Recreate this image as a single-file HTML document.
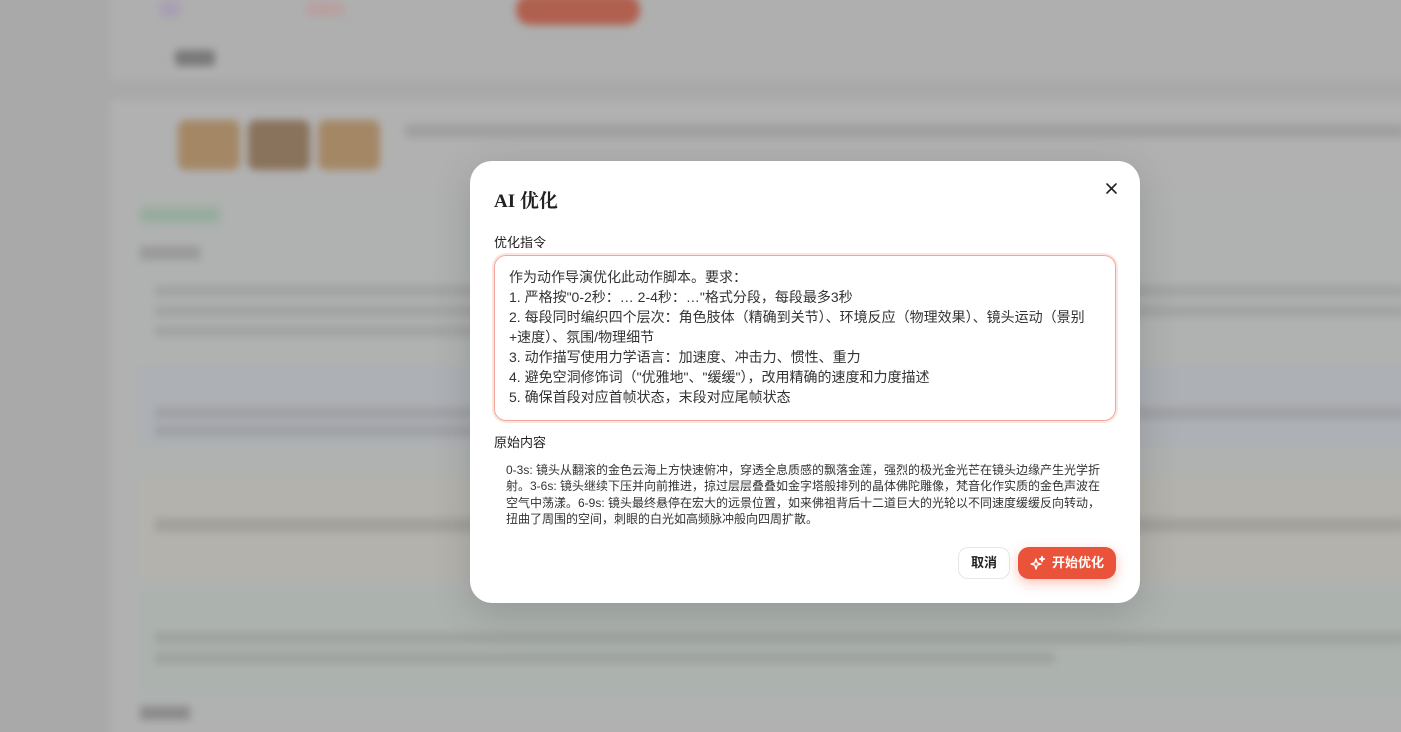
<!DOCTYPE html>
<html><head><meta charset="utf-8"><style>
*{margin:0;padding:0;box-sizing:border-box}
html,body{width:1401px;height:732px;overflow:hidden}
body{background:#a9a9a9;font-family:"Liberation Sans","Noto Sans CJK SC",sans-serif;position:relative}
.bg{position:absolute;inset:0;filter:blur(4px)}
.b{position:absolute}
.modal{position:absolute;left:470px;top:161px;width:670px;height:442px;background:#fff;border-radius:22px;box-shadow:0 10px 40px rgba(0,0,0,.15)}
.t{position:absolute;left:24px;top:25px;font-family:"Liberation Serif","Noto Serif CJK SC",serif;font-weight:bold;font-size:19px;color:#222}
.lbl{position:absolute;left:24px;font-size:13px;color:#222}
.ta{position:absolute;left:24px;top:94px;width:622px;height:166px;border:1.5px solid #f2a79c;border-radius:12px;box-shadow:0 0 0 2px #fde5e0;padding:11px 14px;font-size:14px;line-height:20px;color:#333;white-space:pre}
.orig{position:absolute;left:36px;top:301px;width:600px;font-size:12px;line-height:16.3px;color:#333}
.btn1{position:absolute;left:488px;top:386px;width:52px;height:32px;border:1px solid #e6e6e6;border-radius:10px;font-size:13px;font-weight:bold;text-align:center;line-height:30px;color:#222}
.btn2{position:absolute;left:548px;top:386px;width:98px;height:32px;background:#ea5239;border-radius:11px;color:#fff;font-size:13px;font-weight:bold;line-height:32px;padding-left:34px;box-shadow:0 4px 12px rgba(234,82,57,.35)}
</style></head><body>
<div class="bg">
<div class="b" style="left:110px;top:-10px;width:1300px;height:90px;background:#afafaf"></div>
<div class="b" style="left:160px;top:0;width:20px;height:18px;background:#a8a0b4;border-radius:4px"></div>
<div class="b" style="left:305px;top:2px;width:40px;height:14px;background:#b8a0a0;border-radius:6px"></div>
<div class="b" style="left:516px;top:-5px;width:124px;height:30px;background:#b0604f;border-radius:14px"></div>
<div class="b" style="left:175px;top:50px;width:40px;height:16px;background:#7a7a7a;border-radius:4px"></div>
<div class="b" style="left:110px;top:100px;width:1300px;height:640px;background:#b1b1b1"></div>
<div class="b" style="left:178px;top:120px;width:62px;height:50px;background:#a48866;border-radius:8px"></div>
<div class="b" style="left:248px;top:120px;width:62px;height:50px;background:#8a735c;border-radius:8px"></div>
<div class="b" style="left:318px;top:120px;width:62px;height:50px;background:#a48866;border-radius:8px"></div>
<div class="b" style="left:405px;top:124px;width:1000px;height:14px;background:#a0a0a0;border-radius:4px"></div>
<div class="b" style="left:135px;top:195px;width:1280px;height:520px;background:#afb2b0;border-radius:10px"></div>
<div class="b" style="left:140px;top:207px;width:80px;height:16px;background:#98ac9f;border-radius:5px"></div>
<div class="b" style="left:140px;top:246px;width:60px;height:14px;background:#9a9a9a"></div>
<div class="b" style="left:155px;top:285px;width:1250px;height:12px;background:#a2a4a3"></div>
<div class="b" style="left:155px;top:305px;width:1250px;height:12px;background:#a2a4a3"></div>
<div class="b" style="left:155px;top:325px;width:600px;height:12px;background:#a2a4a3"></div>
<div class="b" style="left:140px;top:365px;width:1270px;height:80px;background:#adb0b5"></div>
<div class="b" style="left:155px;top:407px;width:1250px;height:12px;background:#9fa1a5"></div>
<div class="b" style="left:155px;top:425px;width:400px;height:12px;background:#9fa1a5"></div>
<div class="b" style="left:140px;top:478px;width:1270px;height:100px;background:#b4b2ac"></div>
<div class="b" style="left:155px;top:518px;width:1250px;height:14px;background:#a3a19c"></div>
<div class="b" style="left:140px;top:592px;width:1270px;height:100px;background:#acb2ae"></div>
<div class="b" style="left:155px;top:632px;width:1250px;height:12px;background:#9fa39f"></div>
<div class="b" style="left:155px;top:652px;width:900px;height:12px;background:#9fa39f"></div>
<div class="b" style="left:140px;top:706px;width:50px;height:14px;background:#8c8c8c"></div>
</div>
<div class="modal">
<div class="t">AI 优化</div>
<svg style="position:absolute;left:635px;top:21px" width="13" height="13" viewBox="0 0 13 13"><path d="M2 2L11 11M11 2L2 11" stroke="#222" stroke-width="1.6" stroke-linecap="round"/></svg>
<div class="lbl" style="top:71px">优化指令</div>
<div class="ta">作为动作导演优化此动作脚本。要求：
1. 严格按"0-2秒：… 2-4秒：…"格式分段，每段最多3秒
2. 每段同时编织四个层次：角色肢体（精确到关节）、环境反应（物理效果）、镜头运动（景别
+速度）、氛围/物理细节
3. 动作描写使用力学语言：加速度、冲击力、惯性、重力
4. 避免空洞修饰词（"优雅地"、"缓缓"），改用精确的速度和力度描述
5. 确保首段对应首帧状态，末段对应尾帧状态</div>
<div class="lbl" style="top:271px">原始内容</div>
<div class="orig">0-3s: 镜头从翻滚的金色云海上方快速俯冲，穿透全息质感的飘落金莲，强烈的极光金光芒在镜头边缘产生光学折射。3-6s: 镜头继续下压并向前推进，掠过层层叠叠如金字塔般排列的晶体佛陀雕像，梵音化作实质的金色声波在空气中荡漾。6-9s: 镜头最终悬停在宏大的远景位置，如来佛祖背后十二道巨大的光轮以不同速度缓缓反向转动，扭曲了周围的空间，刺眼的白光如高频脉冲般向四周扩散。</div>
<div class="btn1">取消</div>
<div class="btn2"><svg style="position:absolute;left:12px;top:8px" width="16" height="16" viewBox="0 0 16 16" fill="none" stroke="#fff" stroke-width="1.4" stroke-linejoin="round"><path d="M6 4L7.2 7.8L11 9L7.2 10.2L6 14L4.8 10.2L1 9L4.8 7.8Z"/><path d="M12 1.5L12.6 3.4L14.5 4L12.6 4.6L12 6.5L11.4 4.6L9.5 4L11.4 3.4Z"/></svg>开始优化</div>
</div>
</body></html>
